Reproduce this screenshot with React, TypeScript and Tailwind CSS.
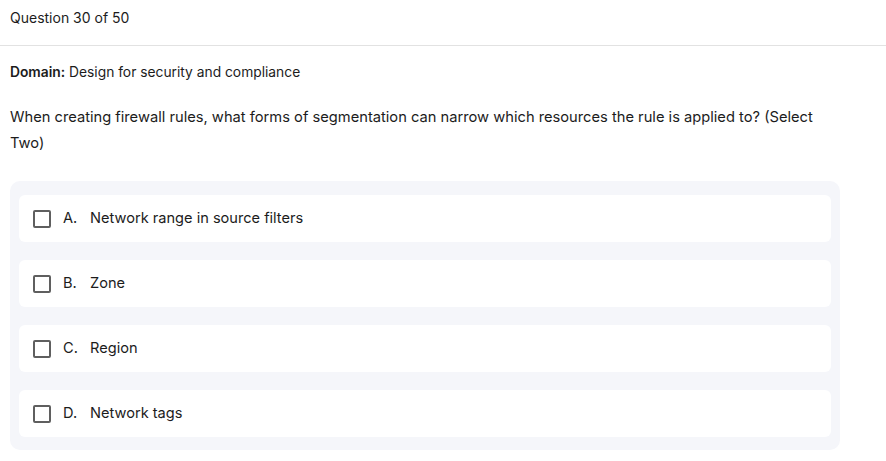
const options = [
  { key: "A.", text: "Network range in source filters" },
  { key: "B.", text: "Zone" },
  { key: "C.", text: "Region" },
  { key: "D.", text: "Network tags" },
];

function Checkbox() {
  return <span className="block w-[18px] h-[18px] shrink-0 rounded-[2px] border-2 border-[#5f5f5f] bg-white" />;
}

export default function App() {
  return (
    <div className="min-h-screen bg-white text-[#1c1c1c]" style={{ fontFamily: "Inter, 'Noto Sans', sans-serif" }}>
      <div className="h-[46px] px-[10px] pt-[7px] text-[14px] border-b border-[#e2e2e2]">Question 30 of 50</div>

      <div className="w-[830px] px-[10px] box-content">
        <p className="mt-[16px] text-[13.8px] leading-[20px]">
          <span className="font-semibold">Domain:</span> Design for security and compliance
        </p>

        <p className="mt-[22px] text-[14.7px] leading-[26px]">
          When creating firewall rules, what forms of segmentation can narrow which resources the rule is applied to?
          (Select Two)
        </p>

        <div className="mt-[25px] rounded-[10px] bg-[#f5f6fa] px-[9px] pt-[14px] pb-[13px] flex flex-col gap-[18px]">
          {options.map((o) => (
            <label key={o.key} className="h-[47px] rounded-[6px] bg-white flex items-center pl-[14px] text-[14.6px] cursor-pointer">
              <Checkbox />
              <span className="ml-[12px] w-[27px]">{o.key}</span>
              <span>{o.text}</span>
            </label>
          ))}
        </div>
      </div>
    </div>
  );
}
